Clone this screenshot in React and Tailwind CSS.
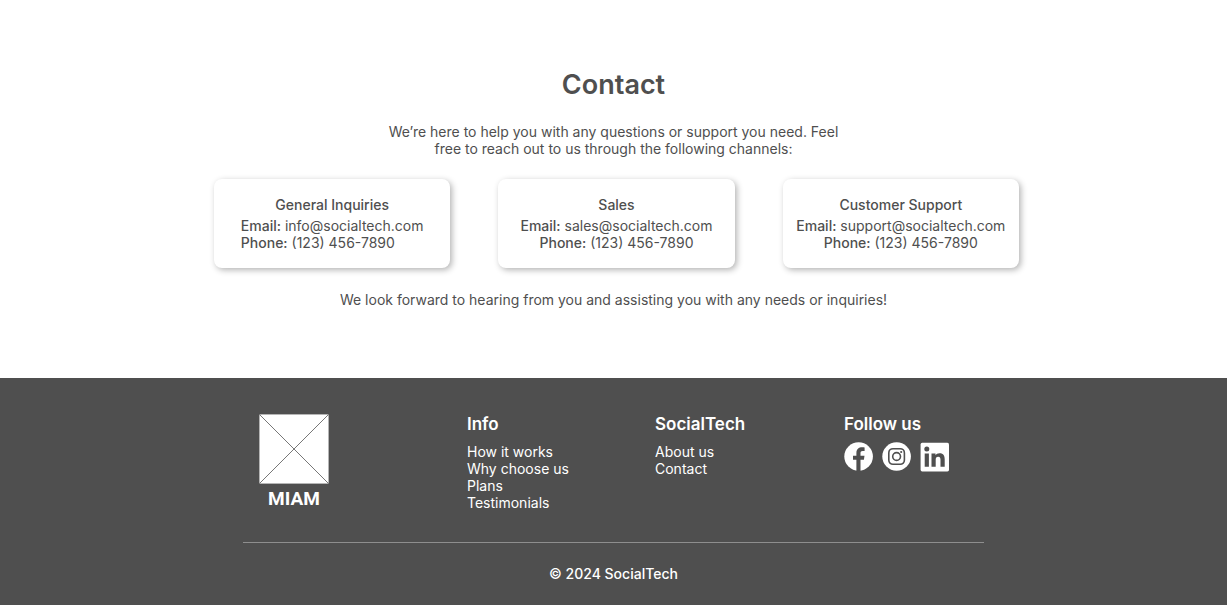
const channels = [
  { title: 'General Inquiries', email: 'info@socialtech.com', align: 'text-left' },
  { title: 'Sales', email: 'sales@socialtech.com', align: 'text-center' },
  { title: 'Customer Support', email: 'support@socialtech.com', align: 'text-center' },
];

const linkGroups = [
  { title: 'Info', links: ['How it works', 'Why choose us', 'Plans', 'Testimonials'] },
  { title: 'SocialTech', links: ['About us', 'Contact'] },
];

function ContactCard({ title, email, align }) {
  return (
    <article className="flex flex-col items-center rounded-lg bg-white py-[17px] shadow-[2px_2px_6px_rgba(0,0,0,0.3)]">
      <h2 className="font-medium">{title}</h2>
      <p className={`mt-1 whitespace-nowrap ${align}`}>
        <span className="font-medium">Email:</span> <a href={`mailto:${email}`}>{email}</a>
        <br />
        <span className="font-medium">Phone:</span> <a href="tel:+11234567890">(123) 456-7890</a>
      </p>
    </article>
  );
}

function FacebookIcon() {
  return (
    <svg viewBox="0 0 30 30" className="size-[30px]" aria-hidden="true">
      <circle cx="14.6" cy="14.5" r="14.3" fill="#fff" />
      <path d="M12.4 30V17.8H9v-4.1h3.4v-2.8c0-3.7 2.3-5.6 5.8-5.6 1 0 1.9.1 2.4.2v3.6h-2c-1.5 0-2.1.8-2.1 2v2.6h4l-.6 4.1h-3.4V30z" fill="#4f4f4f" />
    </svg>
  );
}

function InstagramIcon() {
  return (
    <svg viewBox="0 0 30 30" className="size-[30px]" aria-hidden="true">
      <circle cx="14.6" cy="14.5" r="14.3" fill="#fff" />
      <rect x="6.8" y="6.7" width="15.6" height="15.6" rx="4.2" fill="none" stroke="#4f4f4f" strokeWidth="1.6" />
      <circle cx="14.6" cy="14.5" r="3.9" fill="none" stroke="#4f4f4f" strokeWidth="1.6" />
      <circle cx="19.2" cy="10" r="1.1" fill="#4f4f4f" />
    </svg>
  );
}

function LinkedInIcon() {
  return (
    <svg viewBox="0 0 30 30" className="size-[30px]" aria-hidden="true">
      <rect x="0.6" y="0.8" width="28.4" height="28.6" rx="1.6" fill="#fff" />
      <circle cx="6.8" cy="7" r="2.5" fill="#4f4f4f" />
      <path d="M4.7 11.5h4.2v13.3H4.7zM11.5 11.5h4v1.8c.7-1.2 2.1-2.1 4-2.1 4.1 0 5.2 2.6 5.2 6.2v7.4h-4.2v-6.5c0-1.6-.1-3.5-2.3-3.5s-2.5 1.6-2.5 3.4v6.6h-4.2z" fill="#4f4f4f" />
    </svg>
  );
}

const socials = [
  { name: 'Facebook', Icon: FacebookIcon },
  { name: 'Instagram', Icon: InstagramIcon },
  { name: 'LinkedIn', Icon: LinkedInIcon },
];

export default function App() {
  return (
    <div className="flex min-h-screen flex-col bg-white font-['Inter',sans-serif] text-sm leading-[17px] text-[#4f4f4f]">
      <main className="flex flex-col items-center px-4 pt-[68px] pb-[70px]">
        <h1 className="text-[27px] leading-[34px] font-semibold">Contact</h1>
        <p className="mt-[21px] max-w-[470px] text-center">
          We’re here to help you with any questions or support you need. Feel free to reach out to us through the following channels:
        </p>
        <section className="mt-[22px] ml-1.5 grid w-full max-w-[805px] gap-12 sm:grid-cols-3">
          {channels.map((c) => (
            <ContactCard key={c.title} {...c} />
          ))}
        </section>
        <p className="mt-[23px] text-center">We look forward to hearing from you and assisting you with any needs or inquiries!</p>
      </main>
      <footer className="flex grow flex-col items-center bg-[#4f4f4f] px-4 pt-9 pb-[22px] text-white">
        <div className="w-full max-w-[741px]">
          <div className="grid grid-cols-[224fr_188fr_189fr_140fr] border-b border-[#8e8e8e] pb-[31px]">
            <a href="#home" className="ml-4 flex w-[70px] flex-col items-center">
              <svg viewBox="0 0 70 70" className="size-[70px]" aria-hidden="true">
                <rect x="0.5" y="0.5" width="69" height="69" rx="1" fill="#fff" stroke="#b5b5b5" />
                <path d="M0 0L70 70M70 0L0 70" stroke="#777" />
              </svg>
              <span className="mt-1 font-['Roboto',sans-serif] text-[19px] leading-[22px] font-bold">MIAM</span>
            </a>
            {linkGroups.map((g) => (
              <nav key={g.title} aria-label={g.title}>
                <h2 className="text-[17px] leading-5 font-semibold">{g.title}</h2>
                <ul className="mt-[9px]">
                  {g.links.map((l) => (
                    <li key={l}>
                      <a href="#">{l}</a>
                    </li>
                  ))}
                </ul>
              </nav>
            ))}
            <div>
              <h2 className="text-[17px] leading-5 font-semibold">Follow us</h2>
              <div className="mt-2 flex gap-2">
                {socials.map(({ name, Icon }) => (
                  <a key={name} href="#" aria-label={name}>
                    <Icon />
                  </a>
                ))}
              </div>
            </div>
          </div>
        </div>
        <p className="mt-[22px] font-medium">© 2024 SocialTech</p>
      </footer>
    </div>
  );
}
